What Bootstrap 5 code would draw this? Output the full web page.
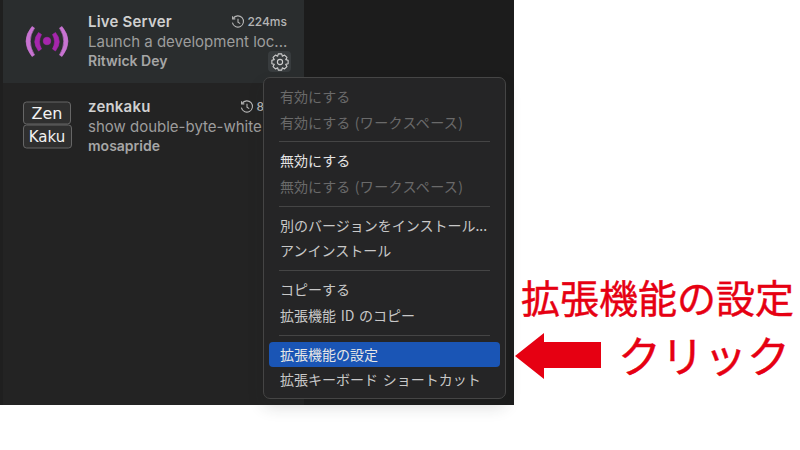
<!DOCTYPE html>
<html lang="ja">
<head>
    <meta charset="UTF-8">
    <title>拡張機能の設定</title>
    <link href="https://cdn.jsdelivr.net/npm/bootstrap@5.3.0/dist/css/bootstrap.min.css" rel="stylesheet">
    <style>
        html, body { height: 100%; }
        body {
            background: #fff;
            font-family: Inter, "Noto Sans CJK JP", sans-serif;
            overflow: hidden;
        }

        /* Editor window */
        .app-shell {
            position: relative;
            width: 514px;
            height: 405px;
            background: #1c1c1c;
        }
        .ext-sidebar {
            width: 304px;
            background: #232323;
            border-left: 3px solid #1f1f1f;
        }
        .ext-row { height: 83px; padding: 12px 17px 0 85px; position: relative; }
        .ext-row.is-next { padding-top: 14px; }
        .ext-row.is-next .ext-time { margin-right: 23px; }
        .ext-row.is-active { background: #2a2d2e; }
        .ext-logo { position: absolute; }
        .logo-live { left: 18px; top: 16px; }
        .logo-zen { left: 19px; top: 17px; }
        .ext-name { font-size: 15px; font-weight: 600; letter-spacing: .2px; color: #d0d0d0; line-height: 20px; }
        .ext-desc { font-size: 15px; color: #9d9d9d; line-height: 20px; white-space: nowrap; }
        .ext-author { font-size: 14px; font-weight: 600; color: #a6a6a6; line-height: 18px; }
        .ext-time { font-size: 12px; font-weight: 500; color: #b5b5b5; gap: 2px; }
        .gear-box {
            position: absolute;
            right: 13px;
            top: 51px;
            width: 23px;
            height: 21px;
            background: #383c3e;
            border-radius: 4px;
        }

        /* Context menu */
        .ctx-menu {
            position: absolute;
            left: 263px;
            top: 77px;
            width: 243px;
            height: 322px;
            padding: 6px 5px;
            background: #252526;
            border: 1px solid #454545;
            border-radius: 7px;
            font-family: "Noto Sans CJK JP", sans-serif;
            font-size: 14px;
            word-spacing: 1.5px;
        }
        .ctx-item {
            height: 25.7px;
            line-height: 25px;
            padding-left: 11px;
            color: #c8c8c8;
            border-radius: 4px;
            white-space: nowrap;
        }
        .ctx-item.is-off { color: #6a6a6a; }
        .ctx-item.is-on { color: #e4e4e4; }
        .ctx-item.is-hot { background: #1a55b5; color: #e6e6e6; }
        .ws-label { letter-spacing: .35px; }
        .ctx-sep { height: 1px; margin: 6px 10px; background: #454545; }

        /* Red annotation */
        .note-col {
            font-family: "Noto Sans CJK JP", sans-serif;
            color: #e60012;
            -webkit-text-stroke: .4px #e60012;
        }
        .note-title { font-size: 39px; line-height: 50px; margin: 271px 0 0 7px; white-space: nowrap; }
        .note-row { margin-top: 3px; }
        .note-click { font-size: 43px; line-height: 60px; margin-left: 16px; padding-bottom: 4px; white-space: nowrap; }
    </style>
</head>
<body>
    <div class="d-flex">
        <div class="app-shell flex-shrink-0">
            <div class="ext-sidebar h-100">
                <!-- Live Server -->
                <div class="ext-row is-active">
                    <!-- viewBox in page coordinates -->
                    <svg class="ext-logo logo-live" width="56" height="50" viewBox="21 16 56 50" stroke-linejoin="round">
                        <g fill="#a626ad" stroke="#a626ad" stroke-width=".6">
                            <circle cx="47" cy="41" r="3.8"/>
                            <path d="M38.5 32.5 Q31 41.5 38.5 51 L41.5 49 Q37.5 41.5 41.5 34.5 Z"/>
                            <path d="M55.5 32.5 Q63 41.5 55.5 51 L52.5 49 Q56.5 41.5 52.5 34.5 Z"/>
                        </g>
                        <g fill="#c873d2" stroke="#c873d2" stroke-width=".6">
                            <path d="M32 26.5 Q20 41 32 56.5 L34.5 55 Q26 41 34.5 28 Z"/>
                            <path d="M62 26.5 Q74 41 62 56.5 L59.5 55 Q68 41 59.5 28 Z"/>
                        </g>
                    </svg>
                    <div class="d-flex justify-content-between align-items-center">
                        <span class="ext-name">Live Server</span>
                        <span class="ext-time d-flex align-items-center">
                            <svg width="14" height="14" viewBox="0 0 14 14" fill="none" stroke="#b5b5b5" stroke-width="1.1">
                                <path d="M2.2 3.4 A5.6 5.6 0 1 1 1.4 7.6"/>
                                <path d="M1.6 1.2 V3.9 H4.3"/>
                                <path d="M7 3.8 V7.2 L9.2 8.6"/>
                            </svg>224ms
                        </span>
                    </div>
                    <div class="ext-desc">Launch a development loc...</div>
                    <div class="ext-author">Ritwick Dey</div>
                    <div class="gear-box d-flex align-items-center justify-content-center">
                        <svg width="18" height="18" viewBox="-9 -9 18 18" fill="none" stroke="#cfcfcf" stroke-width="1.1" stroke-linejoin="round">
                            <circle r="2.6"/>
                            <polygon points="8.12,-1.73 8.12,1.73 5.73,2.37 6.96,4.52 4.52,6.96 2.37,5.73 1.73,8.12 -1.73,8.12 -2.37,5.73 -4.52,6.96 -6.96,4.52 -5.73,2.37 -8.12,1.73 -8.12,-1.73 -5.73,-2.37 -6.96,-4.52 -4.52,-6.96 -2.37,-5.73 -1.73,-8.12 1.73,-8.12 2.37,-5.73 4.52,-6.96 6.96,-4.52 5.73,-2.37"/>
                        </svg>
                    </div>
                </div>
                <!-- zenkaku -->
                <div class="ext-row is-next">
                    <svg class="ext-logo logo-zen" width="52" height="52" viewBox="0 0 52 52" fill="none">
                        <rect x="1.5" y="2" width="47" height="22" rx="3" fill="#2f2f2f" stroke="#666"/>
                        <rect x="1.5" y="25" width="48" height="23" rx="3" fill="#2f2f2f" stroke="#666"/>
                        <text x="25" y="18.5" text-anchor="middle" fill="#f2f2f2" font-family="DejaVu Sans" font-size="16">Zen</text>
                        <text x="25" y="42" text-anchor="middle" fill="#f2f2f2" font-family="DejaVu Sans" font-size="15">Kaku</text>
                    </svg>
                    <div class="d-flex justify-content-between align-items-center">
                        <span class="ext-name">zenkaku</span>
                        <span class="ext-time d-flex align-items-center">
                            <svg width="14" height="14" viewBox="0 0 14 14" fill="none" stroke="#b5b5b5" stroke-width="1.1">
                                <path d="M2.2 3.4 A5.6 5.6 0 1 1 1.4 7.6"/>
                                <path d="M1.6 1.2 V3.9 H4.3"/>
                                <path d="M7 3.8 V7.2 L9.2 8.6"/>
                            </svg>8
                        </span>
                    </div>
                    <div class="ext-desc">show double-byte-white</div>
                    <div class="ext-author">mosapride</div>
                </div>
            </div>

            <!-- context menu, sits over the sidebar -->
            <div class="ctx-menu shadow">
                <div class="ctx-item is-off">有効にする</div>
                <div class="ctx-item is-off">有効にする <span class="ws-label">(ワークスペース)</span></div>
                <div class="ctx-sep"></div>
                <div class="ctx-item is-on">無効にする</div>
                <div class="ctx-item is-off">無効にする <span class="ws-label">(ワークスペース)</span></div>
                <div class="ctx-sep"></div>
                <div class="ctx-item">別のバージョンをインストール...</div>
                <div class="ctx-item">アンインストール</div>
                <div class="ctx-sep"></div>
                <div class="ctx-item">コピーする</div>
                <div class="ctx-item">拡張機能 ID のコピー</div>
                <div class="ctx-sep"></div>
                <div class="ctx-item is-hot">拡張機能の設定</div>
                <div class="ctx-item">拡張キーボード ショートカット</div>
            </div>
        </div>

        <div class="note-col">
            <div class="note-title">拡張機能の設定</div>
            <div class="note-row d-flex align-items-center">
                <svg width="88" height="46" viewBox="0 0 88 46" class="flex-shrink-0">
                    <polygon points="1,23 30,0 30,9 87,9 87,35 30,35 30,46" fill="#e60012"/>
                </svg>
                <div class="note-click">クリック</div>
            </div>
        </div>
    </div>
    <script src="https://cdn.jsdelivr.net/npm/bootstrap@5.3.0/dist/js/bootstrap.bundle.min.js"></script>
</body>
</html>
